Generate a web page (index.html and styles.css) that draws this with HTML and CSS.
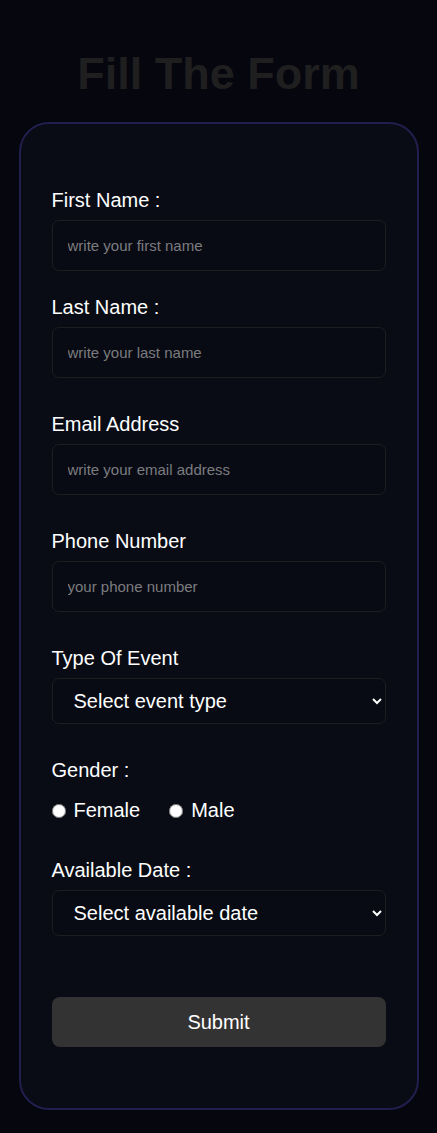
FILE: index.html
```html
<!DOCTYPE html>
<html lang="en">
<head>
<meta charset="utf-8">
<title>Fill The Form</title>
<link rel="stylesheet" href="styles.css">
</head>
<body>
<h1 class="title">Fill The Form</h1>
<form class="card">
  <div class="field field-first">
    <label class="label" for="fn">First Name :</label>
    <input class="input" id="fn" type="text" placeholder="write your first name">
  </div>
  <div class="field field-tight">
    <label class="label" for="ln">Last Name :</label>
    <input class="input" id="ln" type="text" placeholder="write your last name">
  </div>
  <div class="field">
    <label class="label" for="em">Email Address</label>
    <input class="input" id="em" type="email" placeholder="write your email address">
  </div>
  <div class="field">
    <label class="label" for="ph">Phone Number</label>
    <input class="input" id="ph" type="tel" placeholder="your phone number">
  </div>
  <div class="field">
    <label class="label" for="ev">Type Of Event</label>
    <select class="select" id="ev">
      <option>Select event type</option>
    </select>
  </div>
  <div class="field">
    <span class="label">Gender :</span>
    <div class="radios">
      <label class="radio"><input type="radio" name="g"> Female</label>
      <label class="radio"><input type="radio" name="g"> Male</label>
    </div>
  </div>
  <div class="field field-date">
    <label class="label" for="dt">Available Date :</label>
    <select class="select" id="dt">
      <option>Select available date</option>
    </select>
  </div>
  <button class="submit" type="button">Submit</button>
</form>
</body>
</html>
```

FILE: styles.css
```css
html, body {
  margin: 0;
  padding: 0;
  background: #06060f;
  font-family: "Liberation Sans", Arial, sans-serif;
}
body {
  min-height: 1133px;
  padding-top: 48px;
  box-sizing: border-box;
}
.title {
  margin: 0;
  text-align: center;
  font-size: 45px;
  font-weight: 700;
  color: #1f1f1f;
  line-height: 52px;
}
.card {
  width: 400px;
  box-sizing: border-box;
  margin: 22px auto 0;
  background: #090c15;
  border: 2px solid #221e4e;
  border-radius: 30px;
  padding: 65px 31px 61px;
  display: flex;
  flex-direction: column;
}
.field {
  display: flex;
  flex-direction: column;
  gap: 8px;
  margin-top: 35px;
}
.field-first { margin-top: 0; }
.field-tight { margin-top: 25px; }
.field-date { margin-top: 37px; }
.label {
  color: #ffffff;
  font-size: 20px;
  line-height: 23px;
}
.input {
  height: 51px;
  box-sizing: border-box;
  background: #080b13;
  border: 1px solid #1e1e22;
  border-radius: 7px;
  padding: 0 15px;
  color: #ffffff;
  font-family: "Liberation Sans", Arial, sans-serif;
  font-size: 15px;
  outline: none;
}
.input::placeholder {
  color: #7c7c80;
}
.select {
  height: 46px;
  box-sizing: border-box;
  background: #080b13;
  border: 1px solid #1e1e22;
  border-radius: 7px;
  padding: 0 6px 0 17px;
  color: #ffffff;
  font-family: "Liberation Sans", Arial, sans-serif;
  font-size: 20px;
}
.radios {
  display: flex;
  gap: 29px;
  margin-top: 9px;
}
.radio {
  display: flex;
  align-items: center;
  gap: 8px;
  color: #ffffff;
  font-size: 20px;
  line-height: 23px;
}
.radio input {
  margin: 0;
  width: 14px;
  height: 14px;
}
.submit {
  margin-top: 61px;
  height: 50px;
  background: #333333;
  border: none;
  border-radius: 8px;
  color: #ffffff;
  font-family: "Liberation Sans", Arial, sans-serif;
  font-size: 20px;
}
```
